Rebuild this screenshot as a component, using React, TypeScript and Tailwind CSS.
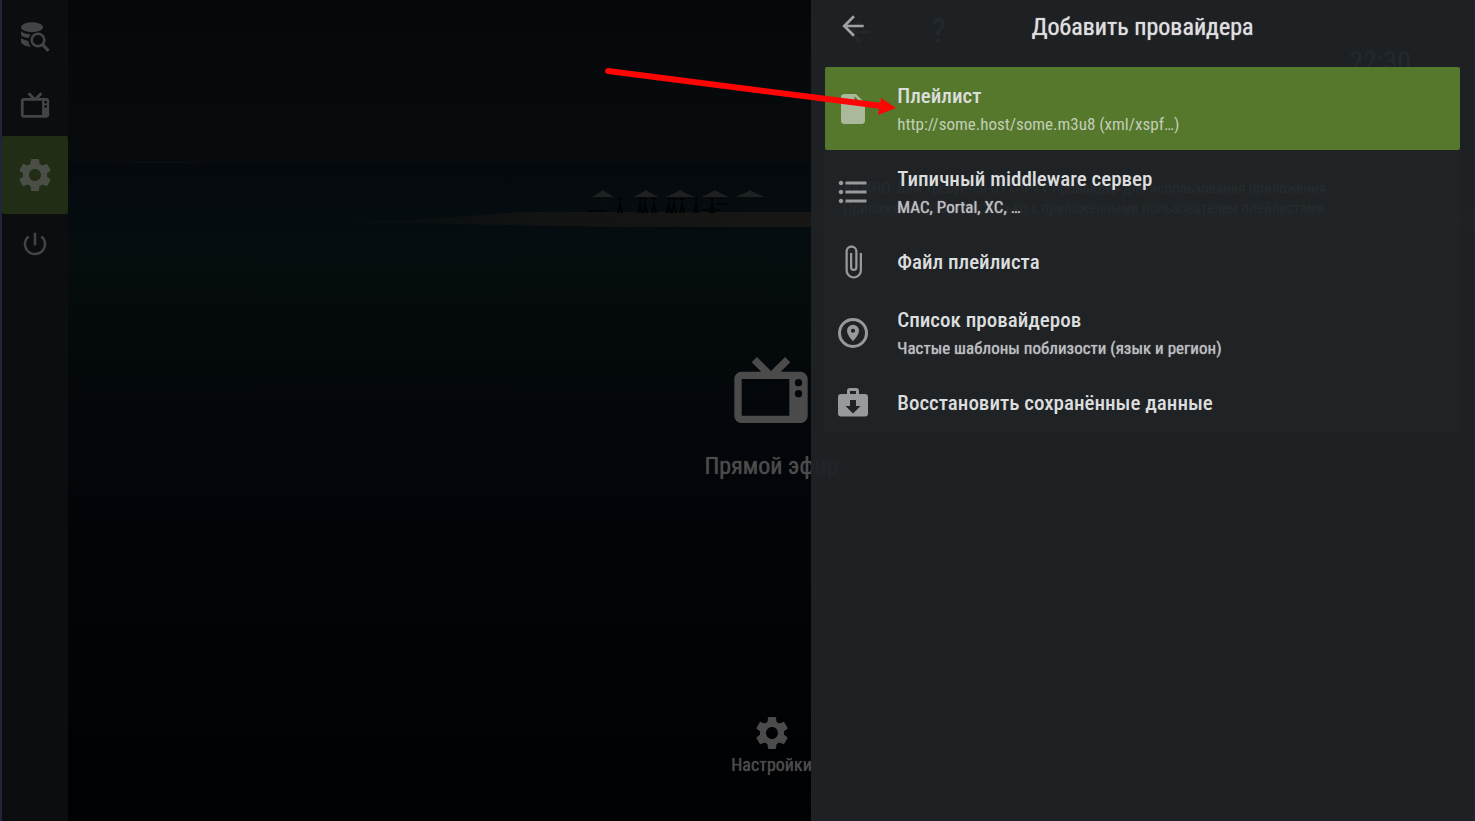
import React from "react";
import clsx from "clsx";
import { MdArrowBack, MdAttachFile, MdFormatListBulleted, MdInsertDriveFile, MdPowerSettingsNew, MdSettings } from "react-icons/md";

type IconProps = { className?: string };

function TvIcon({ className }: IconProps) {
  return (
    <svg viewBox="0 0 24 24" fill="currentColor" className={className} aria-hidden="true">
      <path d="M8.16 3 6.75 4.41 9.34 7H4c-1.11 0-2 .89-2 2v10c0 1.11.89 2 2 2h16c1.11 0 2-.89 2-2V9c0-1.11-.89-2-2-2h-5.34l2.59-2.59L15.84 3 12 6.84 8.16 3M4 9h13v10H4V9m15.5 0a1 1 0 0 1 1 1 1 1 0 0 1-1 1 1 1 0 0 1-1-1 1 1 0 0 1 1-1m0 3a1 1 0 0 1 1 1 1 1 0 0 1-1 1 1 1 0 0 1-1-1 1 1 0 0 1 1-1Z" />
    </svg>
  );
}

function DatabaseSearchIcon({ className }: IconProps) {
  return (
    <svg viewBox="0 0 30 32" className={className} aria-hidden="true">
      <g fill="currentColor">
        <ellipse cx="12" cy="6.2" rx="11" ry="5" />
        <path d="M1 10.3C3 12.300 6.500 13.300 10.800 13.400 9.800 14.300 9 15.500 8.600 17 4.500 16.600 1 15 1 13.200Z" />
        <path d="M1 17C3 18.700 5.400 19.400 8.300 19.700 8.500 22 9.400 24 11 25.700 5.500 25.500 1 23.300 1 20.800Z" />
      </g>
      <circle cx="18" cy="19" r="6.3" fill="none" stroke="currentColor" strokeWidth="2.6" />
      <path d="m22.500 23.500 6 6.300" fill="none" stroke="currentColor" strokeWidth="3.2" />
    </svg>
  );
}

function PlaceIcon({ className }: IconProps) {
  return (
    <svg viewBox="0 0 24 24" className={className} aria-hidden="true">
      <circle cx="12" cy="12" r="9" fill="none" stroke="currentColor" strokeWidth="2" />
      <path fill="currentColor" fillRule="evenodd" d="M12 6.500a4 4 0 0 0-4 4C8 13.500 12 17.500 12 17.500s4-4 4-7a4 4 0 0 0-4-4Zm0 5.400a1.400 1.400 0 1 1 0-2.800 1.400 1.400 0 0 1 0 2.800Z" />
    </svg>
  );
}

function RestoreIcon({ className }: IconProps) {
  return (
    <svg viewBox="0 0 24 24" fill="currentColor" className={className} aria-hidden="true">
      <path fillRule="evenodd" d="M10 2h4a2 2 0 0 1 2 2v2h4a2 2 0 0 1 2 2v11a2 2 0 0 1-2 2H4a2 2 0 0 1-2-2V8a2 2 0 0 1 2-2h4V4a2 2 0 0 1 2-2Zm0 2v2h4V4h-4Zm0 6v4H7l5 5 5-5h-3v-4h-4Z" />
    </svg>
  );
}

const RAIL = [
  { id: "search", label: "Поиск", icon: DatabaseSearchIcon, size: "h-8 w-[30px]", cell: "h-[74px]" },
  { id: "tv", label: "Прямой эфир", icon: TvIcon, size: "size-[34px]", cell: "h-[62px]" },
  { id: "settings", label: "Настройки", icon: MdSettings, size: "size-10", cell: "h-[78px]", active: true },
  { id: "power", label: "Выход", icon: MdPowerSettingsNew, size: "size-[30px]", cell: "h-[60px]" },
];

const PROVIDERS = [
  { id: "playlist", title: "Плейлист", hint: "http://some.host/some.m3u8 (xml/xspf…)", icon: MdInsertDriveFile, active: true },
  { id: "middleware", title: "Типичный middleware сервер", hint: "MAC, Portal, XC, …", icon: MdFormatListBulleted },
  { id: "file", title: "Файл плейлиста", icon: MdAttachFile },
  { id: "list", title: "Список провайдеров", hint: "Частые шаблоны поблизости (язык и регион)", icon: PlaceIcon },
  { id: "restore", title: "Восстановить сохранённые данные", icon: RestoreIcon },
];

const UMBRELLAS = [
  { x: 603, w: 11 },
  { x: 646, w: 13 },
  { x: 680, w: 15 },
  { x: 715, w: 14 },
  { x: 750, w: 15 },
];

const PEOPLE = [620, 640, 645, 654, 669, 674, 682, 696, 712];

function Beach() {
  return (
    <svg viewBox="0 0 1475 821" preserveAspectRatio="none" className="absolute inset-0 size-full" aria-hidden="true">
      <defs>
        <linearGradient id="sky" x1="0" y1="0" x2="0" y2="1">
          <stop offset="0" stopColor="#05080b" />
          <stop offset="1" stopColor="#080b0e" />
        </linearGradient>
        <linearGradient id="sea" x1="0" y1="0" x2="0" y2="1">
          <stop offset="0" stopColor="#05090d" />
          <stop offset="0.08" stopColor="#050c0f" />
          <stop offset="0.15" stopColor="#060d0f" />
          <stop offset="0.24" stopColor="#040a0c" />
          <stop offset="0.4" stopColor="#03060a" />
          <stop offset="1" stopColor="#000103" />
        </linearGradient>
        <linearGradient id="sand" x1="0" y1="0" x2="1" y2="0">
          <stop offset="0" stopColor="#0e1011" stopOpacity="0" />
          <stop offset="0.2" stopColor="#121313" />
          <stop offset="0.4" stopColor="#171615" />
          <stop offset="1" stopColor="#171615" />
        </linearGradient>
      </defs>
      <rect width="1475" height="164" fill="url(#sky)" />
      <rect y="163" width="1475" height="658" fill="url(#sea)" />
      <path d="M120 163q40-3 85 0Z" fill="#0c1013" />
      <path d="M300 223 410 220 470 216 520 212H1475V227H620L400 223Z" fill="url(#sand)" />
      {UMBRELLAS.map(({ x, w }) => (
        <g key={x}>
          <path d={`M${x} 195v17`} stroke="#0c0e0f" />
          <path d={`M${x - w} 197 Q${x - 4} 193 ${x} 190 Q${x + 4} 193 ${x + w} 197Z`} fill="#1f2120" />
        </g>
      ))}
      {PEOPLE.map(x => (
        <g key={x}>
          <circle cx={x} cy="199" r="1.5" fill="#010203" />
          <path d={`M${x} 202v4M${x} 205l-2 8M${x} 205l2 8`} stroke="#010203" strokeWidth="2" />
        </g>
      ))}
      <path d="M588 211h18M702 210h18M716 204h12" stroke="#020405" strokeWidth="2" />
    </svg>
  );
}

// screen left behind the drawer, barely showing through it
function InfoScreen() {
  return (
    <div aria-hidden="true" className="absolute inset-y-0 right-0 w-[45%] pl-8 text-[#8c8c8c]">
      <div className="flex h-12 items-end gap-14">
        <MdArrowBack className="size-8" />
        <span className="text-[34px] leading-9">?</span>
      </div>
      <p className="pr-16 text-right text-[28px] leading-7">22:30</p>
      <p className="pt-[102px] text-[15px] leading-5 whitespace-nowrap">
        ВАЖНО: Вам требуется OTT/IPTV провайдер для использования приложения.
        <br />
        Приложение работает только с приложенными пользователем плейлистами.
      </p>
    </div>
  );
}

function Pointer() {
  return (
    <svg viewBox="0 0 300 60" className="pointer-events-none absolute top-[62px] -left-[211px] h-[60px] w-[300px]" aria-hidden="true">
      <path d="M8 9 282 44" stroke="#fb0505" strokeWidth="6" strokeLinecap="round" />
      <path d="M281 36 296 46 278 53Z" fill="#fb0505" />
    </svg>
  );
}

export default function App() {
  return (
    <div className="relative flex h-screen overflow-hidden bg-black font-['Roboto_Condensed',Roboto,sans-serif]">
      <Beach />

      <nav className="relative flex w-[68px] flex-col border-l-2 border-[#20263a] bg-[#0c0d0f]">
        {RAIL.map(({ id, label, icon: Icon, size, cell, active }) => (
          <button key={id} type="button" aria-label={label}
            className={clsx("flex items-center justify-center rounded-xs", cell, active ? "bg-[#212d14] text-[#4a4e47]" : "text-[#434446]")}>
            <Icon className={size} />
          </button>
        ))}
      </nav>

      <main className="relative flex flex-1 flex-col items-center pb-11 text-[#4b4b4b]">
        <div className="flex flex-1 flex-col items-center justify-center pt-[114px]">
          <button type="button" className="flex flex-col items-center gap-4">
            <TvIcon className="size-[88px]" />
            <span className="text-2xl leading-8 text-shadow-[0_0_1px_#4b4b4b]">Прямой эфир</span>
          </button>
        </div>
        <button type="button" className="flex flex-col items-center">
          <MdSettings className="size-10" />
          <span className="text-lg leading-6 text-shadow-[0_0_1px_#4b4b4b]">Настройки</span>
        </button>
      </main>

      <InfoScreen />

      <aside className="absolute inset-y-0 right-0 w-[45%] border-r border-[#22233a] bg-[#1f2326]/95 px-3.5">
        <header className="relative flex h-[67px] items-start justify-center pt-[11px]">
          <button type="button" aria-label="Назад" className="absolute top-2.5 left-3 text-[#9fa1a2]">
            <MdArrowBack className="size-8" />
          </button>
          <h1 className="text-2xl leading-8 text-[#dedede] text-shadow-[0_0_1px_#dedede]">Добавить провайдера</h1>
        </header>

        <ul className="bg-white/1">
          {PROVIDERS.map(({ id, title, hint, icon: Icon, active }) => (
            <li key={id}>
              <button type="button"
                className={clsx("flex w-full items-center gap-[26px] rounded-xs pl-2.5 text-left", hint ? "h-[83px]" : "h-[58px]", active && "bg-[#55782d]")}>
                <Icon className={clsx("size-9 shrink-0", active ? "text-[#a9b999]" : "text-[#97999b]")} />
                <span className={clsx("flex flex-col", hint && "pt-0.5")}>
                  <span className="text-[21px] leading-7 font-medium text-[#dcdddd]">{title}</span>
                  {hint && (
                    <span className={clsx("text-[17px] leading-7", active ? "text-[#c3ceb7]" : "text-[#bcbebf] text-shadow-[0_0_1px_#bcbebf]")}>{hint}</span>
                  )}
                </span>
              </button>
            </li>
          ))}
        </ul>

        <Pointer />
      </aside>
    </div>
  );
}
